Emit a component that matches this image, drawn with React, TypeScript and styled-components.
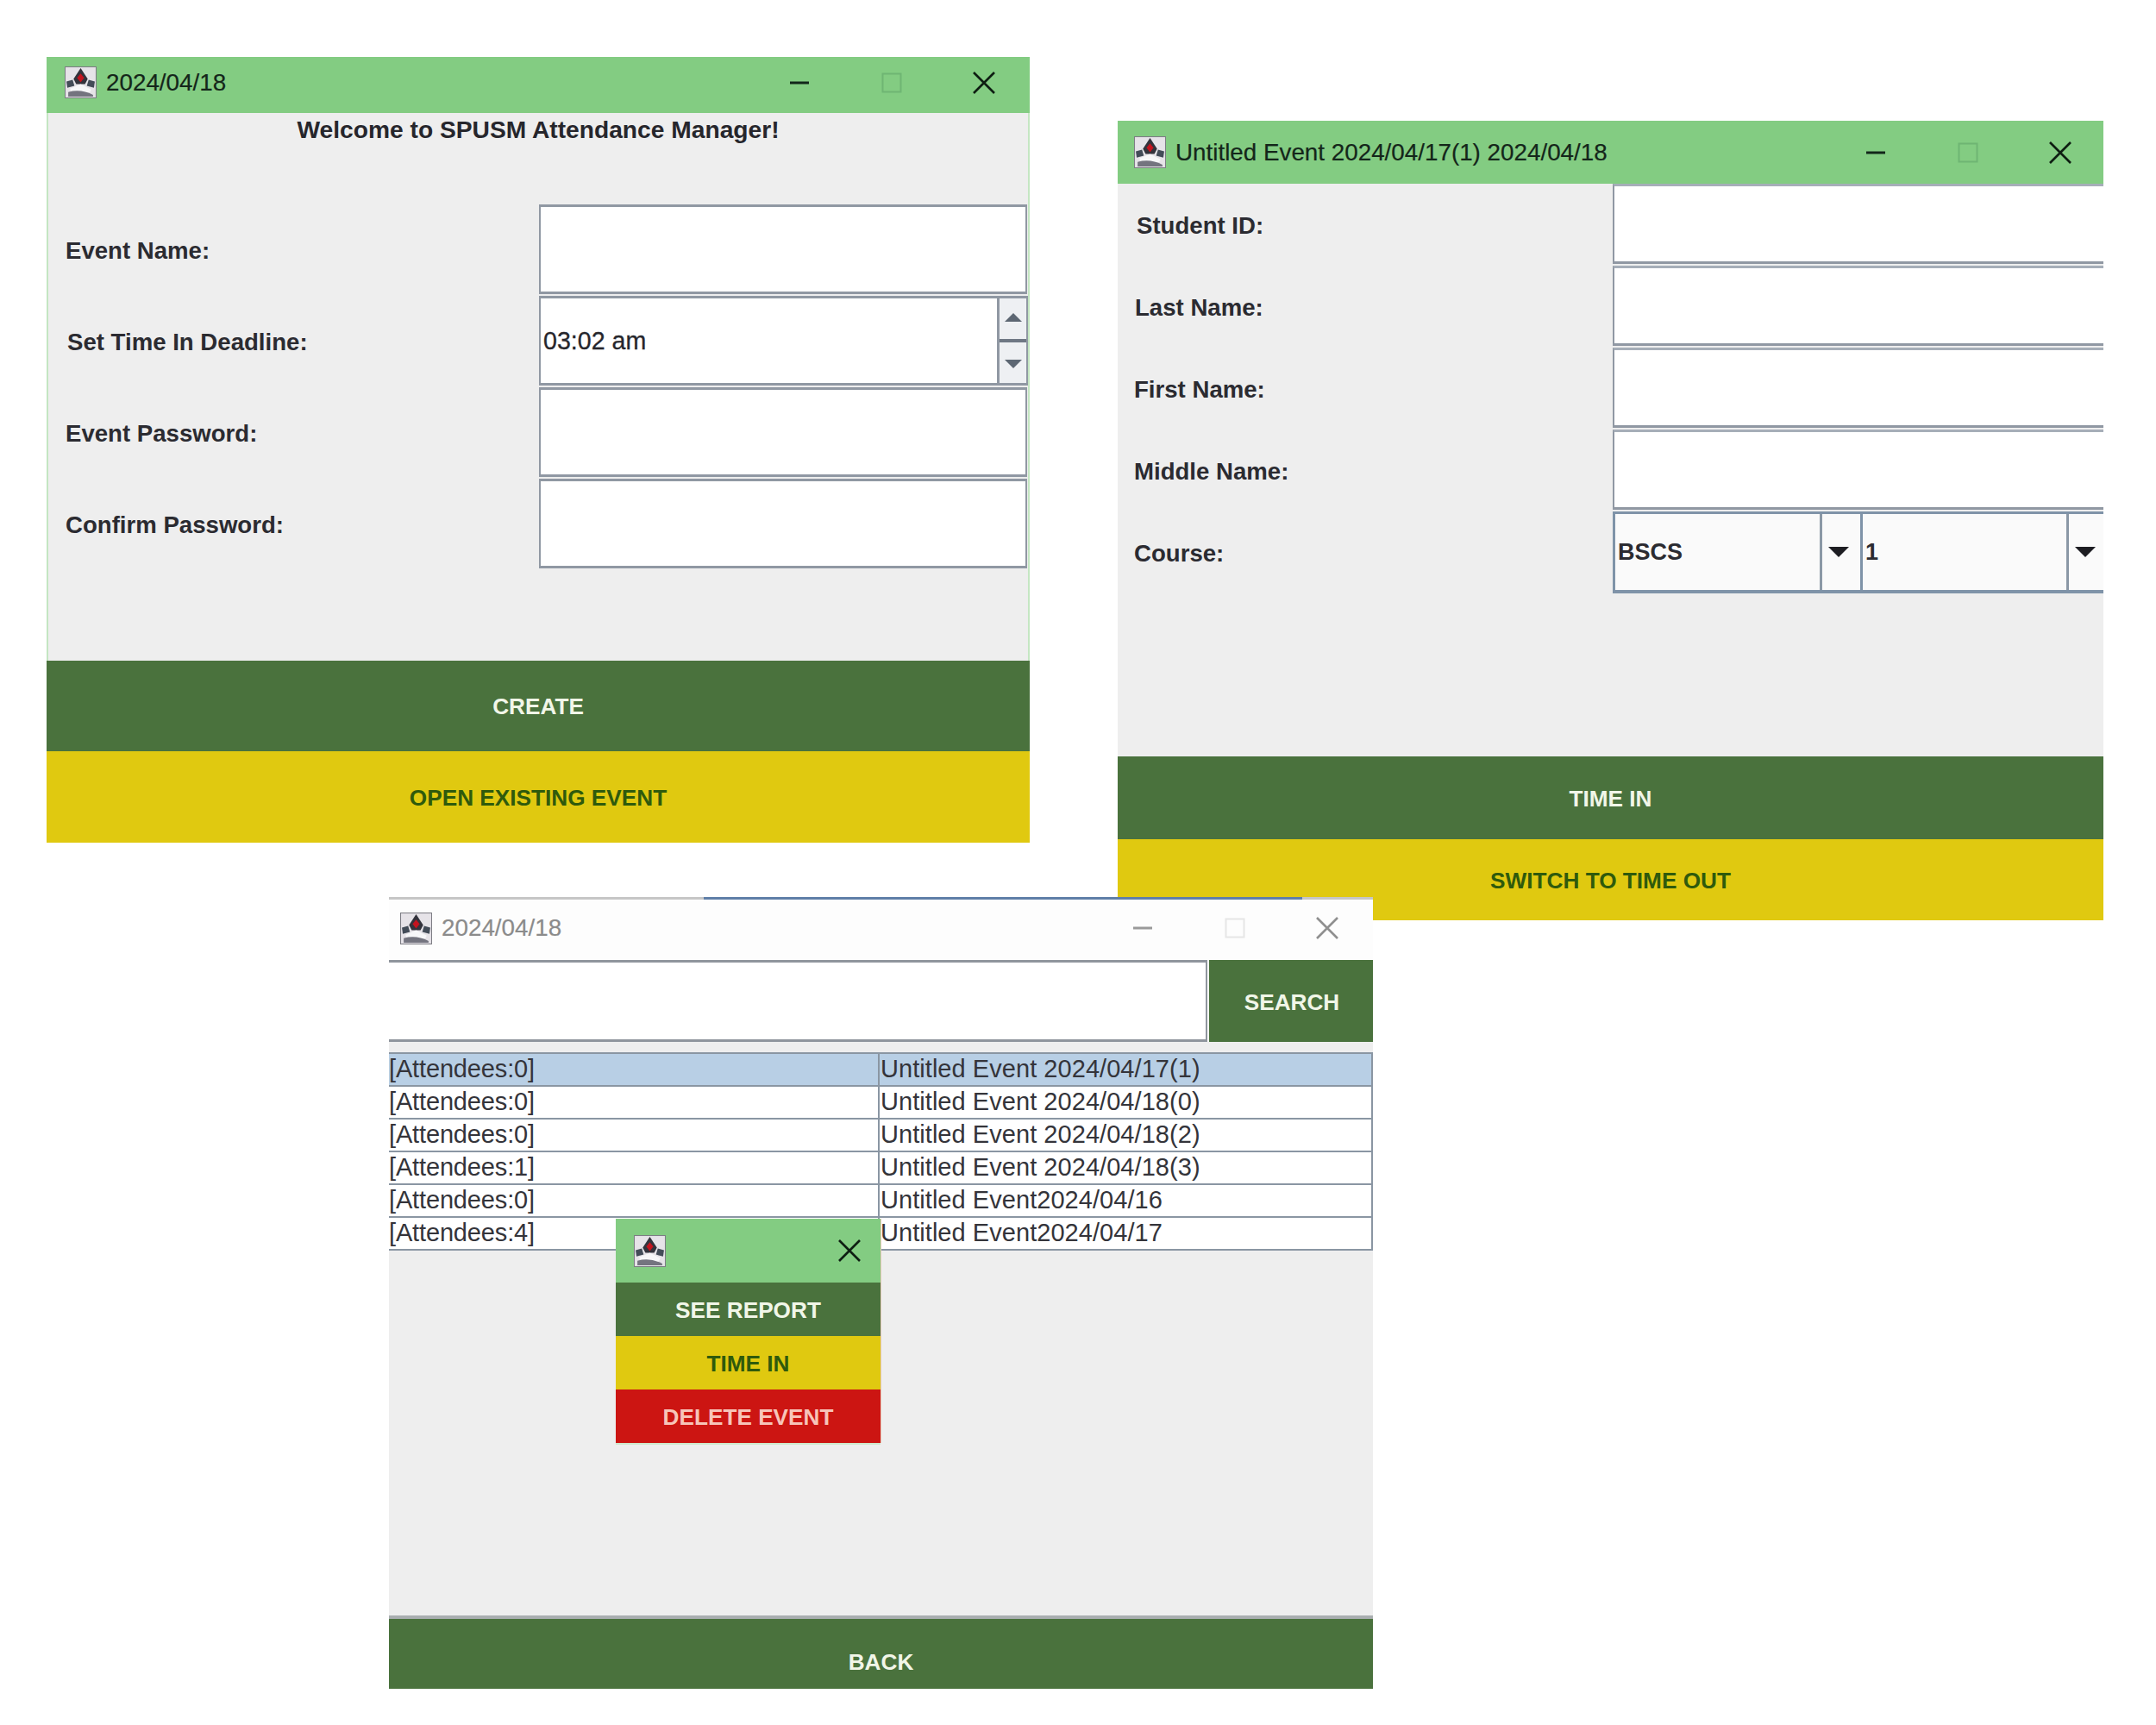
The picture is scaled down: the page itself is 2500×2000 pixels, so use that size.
import React from "react";
import styled, { createGlobalStyle } from "styled-components";

const GlobalStyle = createGlobalStyle`
  html, body {
    margin: 0;
    padding: 0;
    background: #ffffff;
  }
  body {
    font-family: "Liberation Sans", Arial, sans-serif;
  }
`;

const events = [
  { attendees: "[Attendees:0]", name: "Untitled Event 2024/04/17(1)" },
  { attendees: "[Attendees:0]", name: "Untitled Event 2024/04/18(0)" },
  { attendees: "[Attendees:0]", name: "Untitled Event 2024/04/18(2)" },
  { attendees: "[Attendees:1]", name: "Untitled Event 2024/04/18(3)" },
  { attendees: "[Attendees:0]", name: "Untitled Event2024/04/16" },
  { attendees: "[Attendees:4]", name: "Untitled Event2024/04/17" },
];

const AppLogo = () => (
  <LogoSvg viewBox="0 0 36 36">
    <rect x="0.5" y="0.5" width="35" height="35" fill="#e6e3e8" stroke="#7d7d84" />
    <path d="M18 2 L26 14 L23 20 L13 20 L10 14 Z" fill="#33333c" />
    <path d="M18 8 L22 13 L18 18 L14 13 Z" fill="#c4141f" />
    <path d="M2 17 L9 15 L11 22 L3 24 Z" fill="#434c58" />
    <path d="M34 17 L27 15 L25 22 L33 24 Z" fill="#434c58" />
    <path d="M6 25 L18 20 L30 26 L28 30 L8 30 Z" fill="#f7f7f9" />
    <path d="M4 29 Q18 25 32 32 L32 34 L4 34 Z" fill="#74747f" />
  </LogoSvg>
);

const TitleBar = ({
  title,
  pad,
  height,
  lift = 4,
  shift = 0,
  inactive,
}: {
  title: string;
  pad: number;
  height: number;
  lift?: number;
  shift?: number;
  inactive?: boolean;
}) => (
  <Title $pad={pad} $h={height} $lift={lift} $inactive={inactive}>
    <AppLogo />
    <TitleText $inactive={inactive}>{title}</TitleText>
    <Controls $shift={shift}>
      <Control>
        <svg width="24" height="24" viewBox="0 0 24 24">
          <path d="M1 12 H23" stroke={inactive ? "#9a9a9a" : "#12261a"} strokeWidth="3" />
        </svg>
      </Control>
      <Control>
        <svg width="24" height="24" viewBox="0 0 24 24">
          <rect
            x="1.5"
            y="1.5"
            width="21"
            height="21"
            fill="none"
            stroke={inactive ? "#e6e6e6" : "#6fb573"}
            strokeWidth="2"
          />
        </svg>
      </Control>
      <Control>
        <CloseIcon color={inactive ? "#8f8f8f" : "#0e1e12"} />
      </Control>
    </Controls>
  </Title>
);

const CloseIcon = ({ color }: { color: string }) => (
  <svg width="26" height="26" viewBox="0 0 26 26">
    <path d="M1 1 L25 25 M25 1 L1 25" stroke={color} strokeWidth="2.6" fill="none" />
  </svg>
);

const App: React.FC = () => {
  return (
    <Desktop>
      <GlobalStyle />

      <Window $x={54} $y={66} $w={1140} $h={911}>
        <TitleBar title="2024/04/18" pad={21} height={65} lift={6} />
        <Body $edge>
          <Welcome>Welcome to SPUSM Attendance Manager!</Welcome>
          <FormGrid $rowH={106} $labelW={569} $gutter={1}>
            <Label $indent={20}>Event Name:</Label>
            <Field readOnly />
            <Label $indent={22}>Set Time In Deadline:</Label>
            <Spinner>
              <SpinnerValue>03:02 am</SpinnerValue>
              <SpinnerButtons>
                <SpinnerButton>
                  <UpArrow />
                </SpinnerButton>
                <SpinnerButton>
                  <DownArrow />
                </SpinnerButton>
              </SpinnerButtons>
            </Spinner>
            <Label $indent={20}>Event Password:</Label>
            <Field readOnly />
            <Label $indent={20}>Confirm Password:</Label>
            <Field readOnly />
          </FormGrid>
        </Body>
        <ActionButton $kind="primary" $h={105}>CREATE</ActionButton>
        <ActionButton $kind="secondary" $h={106}>OPEN EXISTING EVENT</ActionButton>
      </Window>

      <Window $x={1296} $y={140} $w={1143} $h={927}>
        <TitleBar title="Untitled Event 2024/04/17(1) 2024/04/18" pad={19} height={73} lift={0} shift={-3} />
        <Body>
          <FormGrid $rowH={95} $labelW={574} $gutter={0}>
            <Label $indent={22}>Student ID:</Label>
            <Field readOnly $open />
            <Label $indent={20}>Last Name:</Label>
            <Field readOnly $open />
            <Label $indent={19}>First Name:</Label>
            <Field readOnly $open />
            <Label $indent={19}>Middle Name:</Label>
            <Field readOnly $open />
            <Label $indent={19}>Course:</Label>
            <ComboRow>
              <Combo $w={287}>
                <ComboValue>BSCS</ComboValue>
                <ComboArrow>
                  <ArrowDown />
                </ComboArrow>
              </Combo>
              <Combo $w={286}>
                <ComboValue>1</ComboValue>
                <ComboArrow>
                  <ArrowDown />
                </ComboArrow>
              </Combo>
            </ComboRow>
          </FormGrid>
        </Body>
        <ActionButton $kind="primary" $h={96}>TIME IN</ActionButton>
        <ActionButton $kind="secondary" $h={94}>SWITCH TO TIME OUT</ActionButton>
      </Window>

      <Window $x={451} $y={1040} $w={1141} $h={918}>
        <TopEdge />
        <TitleBar title="2024/04/18" pad={13} height={70} lift={4} inactive />
        <SearchRow>
          <SearchField readOnly />
          <SearchButton>SEARCH</SearchButton>
        </SearchRow>
        <Body>
          <EventTable>
            <colgroup>
              <col width={568} />
              <col />
            </colgroup>
            <tbody>
              {events.map((row, i) => (
                <EventRow key={row.name} $selected={i === 0}>
                  <EventCell>{row.attendees}</EventCell>
                  <EventCell>{row.name}</EventCell>
                </EventRow>
              ))}
            </tbody>
          </EventTable>
        </Body>
        <BackButton>BACK</BackButton>
      </Window>

      <Popup>
        <PopupTitle>
          <AppLogo />
          <CloseIcon color="#0e1e12" />
        </PopupTitle>
        <ActionButton $kind="primary" $h={62}>SEE REPORT</ActionButton>
        <ActionButton $kind="secondary" $h={62}>TIME IN</ActionButton>
        <ActionButton $kind="danger" $h={62}>DELETE EVENT</ActionButton>
      </Popup>
    </Desktop>
  );
};

export default App;

const UpArrow = () => (
  <svg width="24" height="12" viewBox="0 0 24 12">
    <path d="M12 1 L22 11 H2 Z" fill="#5d6773" />
  </svg>
);

const DownArrow = () => (
  <svg width="24" height="12" viewBox="0 0 24 12">
    <path d="M2 1 H22 L12 11 Z" fill="#5d6773" />
  </svg>
);

const ArrowDown = () => (
  <svg width="26" height="14" viewBox="0 0 26 14">
    <path d="M1 1 H25 L13 13 Z" fill="#1d1d22" />
  </svg>
);

const Desktop = styled.div`
  position: relative;
  width: 2500px;
  height: 2000px;
  overflow: hidden;
  background: #ffffff;
`;

const Window = styled.section<{ $x: number; $y: number; $w: number; $h: number }>`
  position: absolute;
  left: ${(p) => p.$x}px;
  top: ${(p) => p.$y}px;
  width: ${(p) => p.$w}px;
  height: ${(p) => p.$h}px;
  display: flex;
  flex-direction: column;
  overflow: hidden;
  background: #eeeeee;
`;

const TopEdge = styled.div`
  height: 3px;
  flex: none;
  background: linear-gradient(
    to right,
    #c6c6c6 0,
    #c6c6c6 32%,
    #5f7fa8 32%,
    #5f7fa8 92.8%,
    #c6c6c6 92.8%
  );
`;

const Title = styled.header<{ $pad: number; $h: number; $lift: number; $inactive?: boolean }>`
  flex: none;
  height: ${(p) => p.$h}px;
  box-sizing: border-box;
  display: flex;
  align-items: center;
  padding-left: ${(p) => p.$pad}px;
  padding-bottom: ${(p) => p.$lift}px;
  background: ${(p) => (p.$inactive ? "#fdfdfd" : "#83cc82")};
`;

const LogoSvg = styled.svg`
  width: 37px;
  height: 37px;
  flex: none;
`;

const TitleText = styled.span<{ $inactive?: boolean }>`
  margin-left: 11px;
  font-size: 27.8px;
  color: ${(p) => (p.$inactive ? "#8b8b8b" : "#14261a")};
  -webkit-text-stroke: 0.2px ${(p) => (p.$inactive ? "#8b8b8b" : "#14261a")};
  white-space: nowrap;
`;

const Controls = styled.div<{ $shift: number }>`
  margin-left: auto;
  margin-right: ${(p) => p.$shift}px;
  display: flex;
`;

const Control = styled.div`
  width: 107px;
  display: flex;
  align-items: center;
  justify-content: center;
`;

const Body = styled.div<{ $edge?: boolean }>`
  flex: 1;
  min-height: 0;
  display: flex;
  flex-direction: column;
  ${(p) => p.$edge && "border-left: 2px solid #c4e6c2; border-right: 2px solid #c4e6c2;"}
`;

const Welcome = styled.h1`
  margin: 0;
  height: 106px;
  box-sizing: border-box;
  font-size: 28.2px;
  line-height: 38px;
  font-weight: 700;
  text-align: center;
  color: #26262c;
`;

const FormGrid = styled.div<{ $rowH: number; $labelW: number; $gutter: number }>`
  display: grid;
  grid-template-columns: ${(p) => p.$labelW}px 1fr;
  grid-auto-rows: ${(p) => p.$rowH}px;
  padding-right: ${(p) => p.$gutter}px;
`;

const Label = styled.label<{ $indent: number }>`
  display: flex;
  align-items: center;
  padding-left: ${(p) => p.$indent}px;
  padding-top: 2px;
  font-size: 27.6px;
  font-weight: 700;
  color: #2b2b31;
`;

const Field = styled.input<{ $open?: boolean }>`
  display: block;
  width: 100%;
  height: calc(100% - 2px);
  box-sizing: border-box;
  margin: 0;
  padding: 0;
  outline: none;
  background: #ffffff;
  border: 2px solid #9098a3;
  border-top-width: 3px;
  border-bottom-width: 3px;
  ${(p) => p.$open && "border-right: none; border-top-color: #a6aeb8;"}
`;

const Spinner = styled.div`
  display: flex;
  height: calc(100% - 2px);
  margin-right: -1px;
  box-sizing: border-box;
  border-top: 3px solid #9098a3;
  border-bottom: 3px solid #9098a3;
  border-left: 2px solid #9098a3;
  background: #ffffff;
`;

const SpinnerValue = styled.div`
  flex: 1;
  display: flex;
  align-items: center;
  padding-left: 3px;
  font-size: 28.6px;
  color: #26262c;
  -webkit-text-stroke: 0.3px #26262c;
`;

const SpinnerButtons = styled.div`
  width: 36px;
  display: flex;
  flex-direction: column;
  border-left: 3px solid #9098a3;
  border-right: 2px solid #9098a3;
  box-sizing: border-box;
`;

const SpinnerButton = styled.div`
  flex: 1;
  display: flex;
  align-items: center;
  justify-content: center;
  padding-bottom: 3px;
  background: #eef0f3;
  & + & {
    padding: 3px 0 0;
    border-top: 4px solid #6f7884;
  }
`;

const ComboRow = styled.div`
  display: flex;
  height: 100%;
  overflow: hidden;
`;

const Combo = styled.div<{ $w: number }>`
  flex: none;
  width: ${(p) => p.$w}px;
  display: flex;
  box-sizing: border-box;
  background: #fafafa;
  border-top: 3px solid #7f93a8;
  border-bottom: 4px solid #7f93a8;
  border-left: 3px solid #7f93a8;
`;

const ComboValue = styled.div`
  flex: 1;
  display: flex;
  align-items: center;
  padding-left: 3px;
  font-size: 27px;
  font-weight: 700;
  color: #2b2b31;
`;

const ComboArrow = styled.div`
  flex: none;
  width: 47px;
  display: flex;
  align-items: center;
  justify-content: center;
  padding-right: 6px;
  box-sizing: border-box;
  border-left: 3px solid #8b98a6;
`;

const buttonColors = {
  primary: { bg: "#4a723d", fg: "#f1f6e8" },
  secondary: { bg: "#e0c910", fg: "#2f5a0c" },
  danger: { bg: "#cc1512", fg: "#f7c4b9" },
};

const ActionButton = styled.button<{ $kind: keyof typeof buttonColors; $h: number }>`
  flex: none;
  height: ${(p) => p.$h}px;
  width: 100%;
  margin: 0;
  padding: 2px 0 0;
  border: none;
  background: ${(p) => buttonColors[p.$kind].bg};
  color: ${(p) => buttonColors[p.$kind].fg};
  font-family: "Liberation Sans", Arial, sans-serif;
  font-size: 26.2px;
  font-weight: 700;
`;

const SearchRow = styled.div`
  flex: none;
  display: flex;
  height: 95px;
  margin-bottom: 12px;
  background: #ffffff;
`;

const SearchField = styled.input`
  flex: 1;
  min-width: 0;
  margin: 0;
  padding: 0;
  outline: none;
  box-sizing: border-box;
  background: #ffffff;
  border: none;
  border-top: 3px solid #8f959d;
  border-bottom: 3px solid #8f959d;
  border-right: 2px solid #8f959d;
`;

const SearchButton = styled.button`
  flex: none;
  width: 190px;
  margin: 0 0 0 2px;
  padding: 3px 0 0 2px;
  border: none;
  background: #4a723d;
  color: #f1f6e8;
  font-family: "Liberation Sans", Arial, sans-serif;
  font-size: 26.2px;
  font-weight: 700;
`;

const EventTable = styled.table`
  width: 100%;
  table-layout: fixed;
  border-collapse: collapse;
  border-top: 2px solid #8a96a3;
  border-right: 2px solid #8a96a3;
`;

const EventRow = styled.tr<{ $selected?: boolean }>`
  height: 38px;
  background: ${(p) => (p.$selected ? "#b8cfe5" : "#ffffff")};
`;

const EventCell = styled.td`
  padding: 0 0 2px 0;
  font-size: 29px;
  line-height: 34px;
  color: #34343a;
  white-space: nowrap;
  letter-spacing: -0.15px;
  border-bottom: 2px solid #8a96a3;
  & + & {
    padding-left: 1px;
    letter-spacing: 0.05px;
    border-left: 2px solid #8a96a3;
  }
`;

const BackButton = styled.button`
  flex: none;
  height: 85px;
  margin: 0;
  padding: 20px 0 0;
  border: none;
  border-top: 4px solid #a9aeb0;
  background: #4a723d;
  color: #f1f6e8;
  font-family: "Liberation Sans", Arial, sans-serif;
  font-size: 26.2px;
  font-weight: 700;
`;

const Popup = styled.div`
  position: absolute;
  left: 714px;
  top: 1413px;
  width: 307px;
  display: flex;
  flex-direction: column;
  box-shadow: 0 2px 0 #cfe8cc, 1px 0 0 #e5c7b5;
`;

const PopupTitle = styled.header`
  height: 74px;
  display: flex;
  align-items: center;
  justify-content: space-between;
  padding: 0 23px 0 21px;
  background: #83cc82;
`;
